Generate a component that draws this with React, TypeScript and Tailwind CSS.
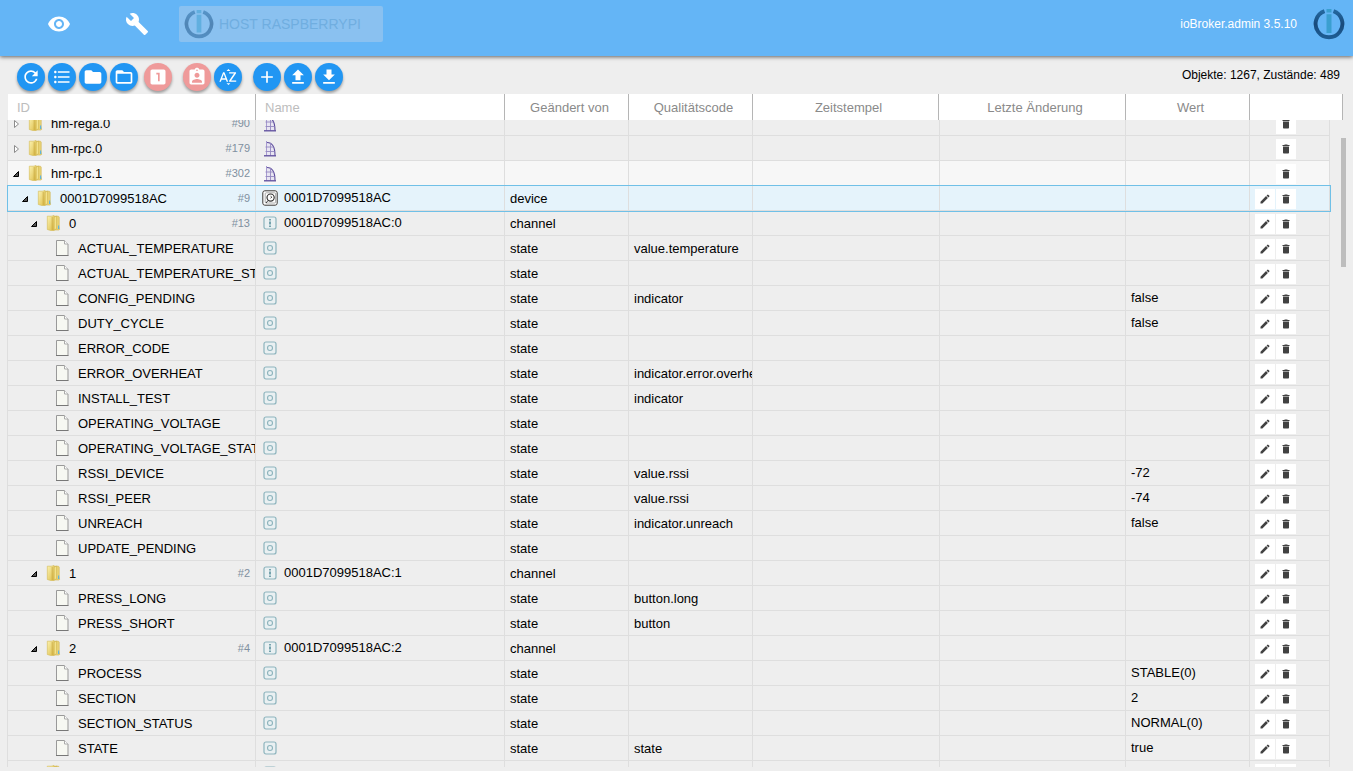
import React from "react";
import clsx from "clsx";
import {
    MdAdd, MdAssignmentInd, MdBuild, MdDelete, MdEdit, MdFileDownload, MdFileUpload,
    MdFolder, MdFolderOpen, MdFormatListBulleted, MdLooksOne, MdRefresh, MdSortByAlpha, MdVisibility,
} from "react-icons/md";

type Kind = "instance" | "device" | "channel" | "state";
type Row = {
    id: string;
    level: number;
    kind: Kind;
    open?: boolean;
    count?: number;
    name?: string;
    role?: string;
    value?: string;
}

const state = (id: string, role?: string, value?: string): Row => ({ id, level: 3, kind: "state", role, value });

const rows: Row[] = [
    { id: "hm-rega.0", level: 0, kind: "instance", count: 90 },
    { id: "hm-rpc.0", level: 0, kind: "instance", count: 179 },
    { id: "hm-rpc.1", level: 0, kind: "instance", count: 302, open: true },
    { id: "0001D7099518AC", level: 1, kind: "device", count: 9, open: true, name: "0001D7099518AC" },
    { id: "0", level: 2, kind: "channel", count: 13, open: true, name: "0001D7099518AC:0" },
    state("ACTUAL_TEMPERATURE", "value.temperature"),
    state("ACTUAL_TEMPERATURE_STATUS"),
    state("CONFIG_PENDING", "indicator", "false"),
    state("DUTY_CYCLE", undefined, "false"),
    state("ERROR_CODE"),
    state("ERROR_OVERHEAT", "indicator.error.overheat"),
    state("INSTALL_TEST", "indicator"),
    state("OPERATING_VOLTAGE"),
    state("OPERATING_VOLTAGE_STATUS"),
    state("RSSI_DEVICE", "value.rssi", "-72"),
    state("RSSI_PEER", "value.rssi", "-74"),
    state("UNREACH", "indicator.unreach", "false"),
    state("UPDATE_PENDING"),
    { id: "1", level: 2, kind: "channel", count: 2, open: true, name: "0001D7099518AC:1" },
    state("PRESS_LONG", "button.long"),
    state("PRESS_SHORT", "button"),
    { id: "2", level: 2, kind: "channel", count: 4, open: true, name: "0001D7099518AC:2" },
    state("PROCESS", undefined, "STABLE(0)"),
    state("SECTION", undefined, "2"),
    state("SECTION_STATUS", undefined, "NORMAL(0)"),
    state("STATE", "state", "true"),
    { id: "3", level: 2, kind: "channel", open: true },
];

const indent = ["pl-0", "pl-[9px]", "pl-[18px]", "pl-[27px]"];

const Logo = ({ className }: { className: string }) => (
    <svg viewBox="0 0 32 32" className={className} aria-hidden="true">
        <defs>
            <linearGradient id="ring" x1="0" x2="0" y1="0" y2="1">
                <stop offset="0" stopColor="#23679f" />
                <stop offset=".5" stopColor="#184a7b" />
                <stop offset="1" stopColor="#1d5c93" />
            </linearGradient>
        </defs>
        <path d="M11.5 3.2a13.4 13.4 0 1 0 9 0" fill="none" stroke="url(#ring)" strokeWidth="3.9" />
        <path d="M13.5 1h5v3.6h-5zM13.5 6.2h5V25h-5z" fill="#3a9fd0" />
    </svg>
);

const Expander = ({ open }: { open?: boolean }) => (
    <svg viewBox="0 0 16 16" className="size-4">
        {open
            ? <path d="M10.5 5.5v5h-5z" fill="#555" stroke="#000" />
            : <path d="M6.5 4.5v7l4-3.5z" fill="#fff" stroke="#8b8b8b" />}
    </svg>
);

const OpenFolder = () => (
    <svg viewBox="0 0 16 16" className="size-4">
        <defs>
            <linearGradient id="leaf" x1="0" x2="1" y1="0" y2="1">
                <stop offset="0" stopColor="#fcf3b0" />
                <stop offset="1" stopColor="#dcbc48" />
            </linearGradient>
        </defs>
        <path d="M8 1.2h5.4l.8.8v9.5l.4 3-.8.5H9z" fill="#e9d377" stroke="#d0b24b" strokeWidth=".6" />
        <path d="M2.3 1.2h4L9 .6v14.8l-2.5.3-4.2-1.2z" fill="url(#leaf)" stroke="#d4bb55" strokeWidth=".6" />
        <path d="M9.2 2.2 11.6 1v12.5l-2.4 1.7z" fill="#f3e28c" stroke="#c9a83c" strokeWidth=".5" />
        <path d="M7.2 2v13" stroke="#c4a33a" strokeWidth=".7" />
        <path d="M13.6 10.5V14" stroke="#5fb4dd" strokeWidth="1.2" />
    </svg>
);

const Sheet = () => (
    <svg viewBox="0 0 16 16" className="size-4">
        <path d="M2.5.5h8L14 4v11.500H2.500z" fill="#f7f8f2" stroke="#999" />
        <path d="M2 15.500h12.500" stroke="#777" />
        <path d="M10.500.5V4H14" fill="#fff" stroke="#aaa" />
    </svg>
);

const KindIcon = ({ kind }: { kind: Kind }) => {
    if (kind === "instance") return (
        <svg viewBox="0 0 16 16" className="mt-0.5 size-4" fill="none" stroke="#5b4a9b">
            <path d="M4.5 1.5C9.5 1.5 13 5 13 14.500H4.500z" fill="#e8e5f2" stroke="none" />
            <path d="M4.500 0v14.500" stroke="#a79bd0" />
            <path d="M5 1.500C9.500 1.500 13 5 13 14.500" strokeWidth="1.100" />
            <path d="M8.500 2v12.500M3.500 6h8M3.500 10.500h9" stroke="#9488c0" strokeWidth=".9" />
            <path d="M2 14.800h12" strokeWidth="1.300" />
        </svg>
    );
    if (kind === "device") return (
        <svg viewBox="0 0 16 16" className="size-4" fill="none" stroke="#333">
            <rect x="0" y="0" width="16" height="16" rx="2" fill="#fff" stroke="none" />
            <rect x=".8" y=".8" width="14.4" height="14.4" rx="2" />
            <rect x="3.2" y="2.8" width="10.4" height="10.2" rx="1" stroke="#999" strokeWidth=".8" />
            <circle cx="8.6" cy="7.6" r="3.6" strokeWidth="1.2" />
            <path d="M8.6 6.2l1.2 1-1.2 1M4 13l2-2.5" />
        </svg>
    );
    return (
        <svg viewBox="0 0 16 16" className="size-4" fill="none" stroke="#8db4bd">
            <rect x="2" y="2" width="12" height="12" rx="2" fill="#e9f0f2" strokeWidth="1.2" />
            {kind === "channel"
                ? <path d="M8 4v1.500M8 6.500v3M8 10.500V12" stroke="#377987" strokeWidth="1.300" />
                : <circle cx="8" cy="8" r="2.500" strokeWidth="1.100" />}
        </svg>
    );
};

const ToolButton = ({ icon: Icon, label, pink, className }: { icon: React.ElementType, label: string, pink?: boolean, className?: string }) => (
    <button
        type="button"
        aria-label={label}
        className={clsx("flex size-7 items-center justify-center rounded-full text-white shadow-[0_2px_3px_rgba(0,0,0,0.35)]", pink ? "bg-[#ef9a9a]" : "bg-[#2196f3]", className)}
    >
        <Icon size={20} />
    </button>
);

const ActionButton = ({ icon: Icon, label }: { icon: React.ElementType, label: string }) => (
    <button type="button" aria-label={label} className="flex size-5 items-center justify-center bg-white text-[#424242]">
        <Icon size={12} />
    </button>
);

const TopBar = () => (
    <header className="z-10 flex h-14 shrink-0 items-start bg-[#64b5f6] pt-1.5 pr-2 pl-[47px] text-white shadow-[0_1px_4px_rgba(0,0,0,0.6)]">
        <nav className="flex h-9 items-center gap-[54px]">
            <a href="#visibility" aria-label="Sichtbarkeit"><MdVisibility size={24} /></a>
            <a href="#settings" aria-label="Einstellungen"><MdBuild size={24} /></a>
        </nav>
        <button type="button" className="ml-[30px] flex h-9 w-51 items-center gap-[5px] rounded-xs bg-[#8ac1f0] pl-[5px] text-sm text-[#70aee0]">
            <Logo className="size-[30px] opacity-50" />
            HOST RASPBERRYPI
        </button>
        <div className="ml-auto flex h-9 items-center gap-4">
            <span className="text-xs">ioBroker.admin 3.5.10</span>
            <Logo className="size-8" />
        </div>
    </header>
);

const Toolbar = () => (
    <div className="flex h-[38px] shrink-0 items-center justify-between pt-1 pr-[13px] pl-[17px]">
        <div className="flex gap-[11px]">
            <div className="flex gap-[3px]">
                <ToolButton icon={MdRefresh} label="Aktualisieren" />
                <ToolButton icon={MdFormatListBulleted} label="Liste" />
                <ToolButton icon={MdFolder} label="Alle zuklappen" />
                <ToolButton icon={MdFolderOpen} label="Alle aufklappen" />
                <ToolButton icon={MdLooksOne} label="Eine Ebene" pink className="ml-[3px]" />
            </div>
            <div className="flex gap-[3px]">
                <ToolButton icon={MdAssignmentInd} label="Expertenmodus" pink />
                <ToolButton icon={MdSortByAlpha} label="Sortieren" />
            </div>
            <div className="flex gap-[3px]">
                <ToolButton icon={MdAdd} label="Neu" />
                <ToolButton icon={MdFileUpload} label="Hochladen" />
                <ToolButton icon={MdFileDownload} label="Herunterladen" />
            </div>
        </div>
        <span className="pb-1 text-xs">Objekte: 1267, Zustände: 489</span>
    </div>
);

const HeadTable = () => (
    <div className="mr-[10px] ml-2 shrink-0">
        <table className="w-full table-fixed border-separate border-spacing-0 bg-white text-[13px] text-[#8a8a8a]">
            <thead>
                <tr className="h-[26px] *:border-r *:border-[#b5b5b5] *:p-0 *:pt-0.5 *:font-normal">
                    <th className="w-[248px]">
                        <input aria-label="ID" placeholder="ID" className="block w-full px-[9px] placeholder:text-[#bdbdbd]" />
                    </th>
                    <th>
                        <input aria-label="Name" placeholder="Name" className="block w-full px-[9px] placeholder:text-[#bdbdbd]" />
                    </th>
                    <th className="w-[124px]"><span className="pl-1.5">Geändert von</span></th>
                    <th className="w-[124px]"><span className="pl-1.5">Qualitätscode</span></th>
                    <th className="w-[186px]"><span className="pl-1.5">Zeitstempel</span></th>
                    <th className="w-[187px]"><span className="pl-1.5">Letzte Änderung</span></th>
                    <th className="w-[124px]"><span className="pl-1.5">Wert</span></th>
                    <th className="w-[93px]" aria-label="Aktionen" />
                </tr>
            </thead>
        </table>
    </div>
);

const ObjectRow = ({ row }: { row: Row }) => {
    const { id, level, kind, open, count, name, role, value } = row;
    return (
        <tr
            className={clsx(
                "*:overflow-hidden *:border-r *:border-b *:border-[#dedede] *:p-0 *:whitespace-nowrap",
                id === "hm-rpc.1" && "bg-[#f7f7f7]",
                kind === "device" && "relative bg-[#e5f3fb] outline outline-[#70c0e7]",
            )}
        >
            <td>
                <div className={clsx("flex h-6 items-center pt-0.5", indent[level])}>
                    <span className="mr-[3px] size-4 shrink-0">{kind !== "state" && <Expander open={open} />}</span>
                    <span className="mr-2 shrink-0 pb-0.5">{kind === "state" ? <Sheet /> : <OpenFolder />}</span>
                    <span>{id}</span>
                    {count && <span className="ml-auto pr-[5px] pb-0.5 text-[11px] text-[#8090a0]">#{count}</span>}
                </div>
            </td>
            <td>
                <div className="flex h-6 items-center gap-1.5 pl-1.5">
                    <KindIcon kind={kind} />
                    {name}
                </div>
            </td>
            <td><div className="flex h-6 items-center pt-0.5 pl-[5px]">{kind !== "instance" && kind}</div></td>
            <td><div className="flex h-6 items-center pt-0.5 pl-[5px]">{role}</div></td>
            <td />
            <td />
            <td><div className="flex h-6 items-center pl-[5px]">{value}</div></td>
            <td>
                <div className="flex h-6 items-center gap-px pt-0.5 pl-[5px]">
                    {kind === "instance" ? <span className="w-5" /> : <ActionButton icon={MdEdit} label={`${id} bearbeiten`} />}
                    <ActionButton icon={MdDelete} label={`${id} löschen`} />
                </div>
            </td>
        </tr>
    );
};

const ObjectTable = () => (
    <div className="mb-1 ml-[7px] flex min-h-0 flex-1">
        <div className="min-w-0 flex-1 overflow-hidden pr-px">
            <table className="-mt-[9px] w-full table-fixed border-separate border-spacing-0 border-l border-[#dedede] text-[13px] leading-5">
                <colgroup>
                    <col className="w-[248px]" />
                    <col />
                    <col className="w-[124px]" />
                    <col className="w-[124px]" />
                    <col className="w-[187px]" />
                    <col className="w-[186px]" />
                    <col className="w-[124px]" />
                    <col className="w-20" />
                </colgroup>
                <tbody>
                    {rows.map((row, index) => <ObjectRow key={index} row={row} />)}
                </tbody>
            </table>
        </div>
        <div className="mt-[18px] mr-[7px] ml-[10px] h-1/5 w-[5px] bg-[#bdbdbd]" />
    </div>
);

export default function App() {
    return (
        <div className="flex h-screen flex-col overflow-hidden bg-[#eeeeee] font-['Liberation_Sans',Arial,sans-serif] text-black">
            <TopBar />
            <Toolbar />
            <HeadTable />
            <ObjectTable />
        </div>
    );
}
